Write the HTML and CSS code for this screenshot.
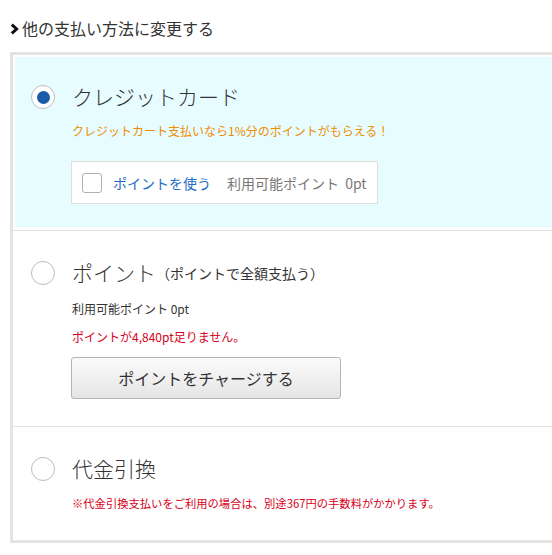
FILE: index.html
```html
<!DOCTYPE html>
<html lang="ja">
<head>
<meta charset="utf-8">
<link rel="stylesheet" href="styles.css">
</head>
<body>
<div class="page">
  <div class="header">
    <svg class="chev" width="9" height="12" viewBox="0 0 9 12"><polyline points="1.8,1.6 6.6,6 1.8,10.4" fill="none" stroke="#111" stroke-width="3"/></svg>
    <span>他の支払い方法に変更する</span>
  </div>
  <div class="methods">
    <div class="method credit">
      <div class="row">
        <span class="radio checked"></span>
        <span class="title">クレジットカード</span>
      </div>
      <div class="body">
        <p class="note orange">クレジットカート支払いなら1%分のポイントがもらえる！</p>
        <div class="usebox">
          <span class="check"></span>
          <span class="use">ポイントを使う</span>
          <span class="avail">利用可能ポイント 0pt</span>
        </div>
      </div>
    </div>
    <div class="method sep">
      <div class="row">
        <span class="radio"></span>
        <span class="title">ポイント</span><span class="paren">（ポイントで全額支払う）</span>
      </div>
      <div class="body">
        <p class="note dark">利用可能ポイント 0pt</p>
        <p class="note red">ポイントが4,840pt足りません。</p>
        <button class="charge">ポイントをチャージする</button>
      </div>
    </div>
    <div class="method sep last">
      <div class="row">
        <span class="radio"></span>
        <span class="title">代金引換</span>
      </div>
      <div class="body">
        <p class="note red small">※代金引換支払いをご利用の場合は、別途367円の手数料がかかります。</p>
      </div>
    </div>
  </div>
</div>
</body>
</html>
```

FILE: styles.css
```css
html, body {
  margin: 0;
  padding: 0;
  background: #fff;
  overflow: hidden;
}
body {
  font-family: "Noto Sans CJK JP", "Noto Sans", sans-serif;
  color: #333;
}
.page {
  width: 552px;
  height: 555px;
  overflow: hidden;
}
.header {
  height: 52px;
  display: flex;
  align-items: center;
  padding-left: 10px;
  padding-top: 4px;
  box-sizing: border-box;
  font-size: 16px;
  line-height: 20px;
  color: #333;
}
.chev {
  margin-right: 3px;
  margin-top: 1px;
}
.methods {
  margin-left: 10px;
  width: 580px;
  border: 3px solid #e3e3e3;
  box-sizing: border-box;
}
.method {
  padding-left: 18px;
}
.method.credit {
  margin: 2px 2px 3px;
  padding: 25px 0 23px 16px;
  background: #e6fcff;
}
.method.sep {
  border-top: 1px solid #e3e3e3;
  padding-top: 27px;
  padding-bottom: 27px;
}
.method.last {
  padding-bottom: 28px;
}
.row {
  display: flex;
  align-items: center;
  height: 30px;
}
.radio {
  width: 24px;
  height: 24px;
  box-sizing: border-box;
  border: 1px solid #bdbdbd;
  border-radius: 50%;
  background: #fff;
  display: flex;
  align-items: center;
  justify-content: center;
  margin-right: 17px;
  flex: none;
}
.radio.checked::after {
  content: "";
  width: 13px;
  height: 13px;
  border-radius: 50%;
  background: #1b5ca8;
}
.title {
  font-size: 21px;
  line-height: 30px;
  font-weight: 300;
  color: #333;
  padding-bottom: 3px;
}
.paren {
  font-size: 14px;
  line-height: 30px;
  color: #333;
  padding-bottom: 1px;
}
.body {
  padding-left: 41px;
}
.note {
  margin: 10px 0 0;
  font-size: 12px;
  line-height: 18px;
}
.note.dark {
  margin-top: 12px;
  color: #333;
}
.orange {
  color: #f08c00;
}
.red {
  color: #d7001a;
}
.small {
  font-size: 11.3px;
}
.usebox {
  margin: 21px 0 0 -1px;
  width: 307px;
  height: 43px;
  box-sizing: border-box;
  border: 1px solid #dedede;
  background: #fff;
  display: flex;
  align-items: center;
  padding-left: 10px;
  font-size: 14px;
}
.check {
  width: 20px;
  height: 20px;
  box-sizing: border-box;
  border: 1px solid #b0b0b0;
  border-radius: 3px;
  background: #fff;
  margin-right: 11px;
}
.use {
  color: #1e6cc6;
  margin-right: 16px;
}
.avail {
  color: #777;
  word-spacing: 3px;
}
.charge {
  display: block;
  margin: 11px 0 0 -1px;
  width: 270px;
  height: 42px;
  border: 1px solid #b3b3b3;
  border-radius: 3px;
  background: linear-gradient(#fbfbfb, #e5e5e5);
  font-family: "Noto Sans CJK JP", "Noto Sans", sans-serif;
  font-size: 16px;
  color: #333;
  padding: 0;
}
```
